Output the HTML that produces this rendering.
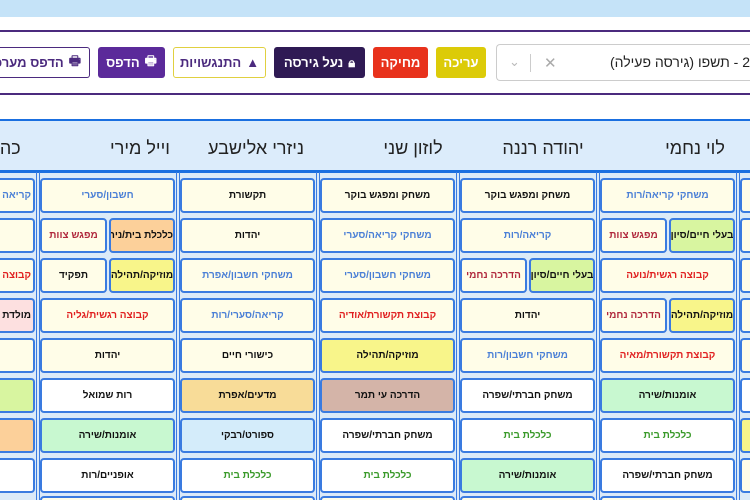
<!DOCTYPE html>
<html style="overflow:hidden"><head><meta charset="utf-8"><style>
*{margin:0;padding:0;box-sizing:border-box}
html,body{width:750px;height:500px;overflow:hidden}
body{background:#fff;font-family:"Liberation Sans","Noto Sans CJK SC",sans-serif}
#w{position:relative;width:750px;height:500px;overflow:hidden}
.a{position:absolute}
.btn{position:absolute;top:47px;height:31px;border-radius:3px;font-size:13px;font-weight:bold;display:flex;align-items:center;justify-content:center;gap:5px;direction:rtl;white-space:nowrap}
.c{position:absolute;height:35px;border:2px solid #3a7be0;border-radius:4px;background:#fffde8;font-size:10px;font-weight:bold;display:flex;align-items:center;justify-content:center;white-space:nowrap;overflow:hidden;direction:rtl;color:#111}
.b{position:absolute;top:496px;height:4px;width:135px;border:2px solid #3a7be0;border-bottom:none;border-radius:4px 4px 0 0;background:#fffde8}
.B{color:#4a7fd6}.R{color:#e02020}.C{color:#b0283c}.G{color:#3a9a2a}
.w{background:#fff}.gr{background:#d8f5a0}.ye{background:#f8f58a}.mi{background:#c8f8d0}.br{background:#d4b4a8}.or{background:#f8dc98}.sk{background:#d4ecfa}.pe{background:#fcd09a}.pk{background:#fde0e0}
.sep{position:absolute;top:172px;width:4px;height:328px;border-left:1.5px solid #3a7be0;border-right:1.5px solid #3a7be0}
.h{position:absolute;top:138px;font-size:18px;color:#222;direction:rtl;white-space:nowrap;transform:translateX(-50%)}
</style></head><body><div id="w">
<div class="a" style="left:0;top:0;width:750px;height:17px;background:#c5e3f8"></div>
<div class="a" style="left:0;top:30px;width:750px;height:2px;background:#4b2a7e"></div>
<div class="a" style="left:0;top:93px;width:750px;height:2px;background:#4b2a7e"></div>
<div class="a" style="left:496px;top:44px;width:254px;height:37px;border:1px solid #ccc;border-right:none;border-radius:4px 0 0 4px"></div>
<div class="a" style="left:530px;top:54px;width:1px;height:18px;background:#ccc"></div>
<div class="a" style="left:509px;top:54px;color:#bbb;font-size:13px">&#8964;</div>
<div class="a" style="left:544px;top:54px;color:#aaa;font-size:15px">✕</div>
<div class="a" style="left:590px;top:54px;font-size:14px;color:#222;direction:rtl;white-space:nowrap;width:160px;overflow:hidden">2 - תשפו (גירסה פעילה)</div>
<div class="btn" style="left:436px;width:50px;background:#dccb08;color:#fff">עריכה</div>
<div class="btn" style="left:373px;width:55px;background:#e8321c;color:#fff">מחיקה</div>
<div class="btn" style="left:274px;width:91px;background:#2f1a54;color:#fff"><span>&#128274;&#xFE0E;</span>נעל גירסה</div>
<div class="btn" style="left:173px;width:93px;background:#fff;border:1px solid #e0d040;color:#4b2a7e"><span>▲</span>התנגשויות</div>
<div class="btn" style="left:98px;width:67px;background:#5b2a9a;color:#fff"><span>🖶</span>הדפס</div>
<div class="btn" style="left:0;width:90px;background:#fff;border:1px solid #4b2a7e;border-left:none;border-radius:0 3px 3px 0;color:#4b2a7e;justify-content:flex-start;padding-right:8px;overflow:hidden"><span>🖶</span>הדפס מערכת</div>
<div class="a" style="left:0;top:119px;width:750px;height:54px;background:#dcecfb;border-top:2px solid #1a6fe0;border-bottom:3px solid #1a6fe0"></div>
<div class="h" style="left:695px">לוי נחמי</div>
<div class="h" style="left:543px">יהודה רננה</div>
<div class="h" style="left:413px">לוזון שני</div>
<div class="h" style="left:256px">ניזרי אלישבע</div>
<div class="h" style="left:140px">וייל מירי</div>
<div class="h" style="left:8px">כהן</div>
<div class="a" style="left:0;top:173px;width:750px;height:327px;background:#dbeaf8"></div>
<div class="sep" style="left:736px"></div><div class="sep" style="left:596px"></div><div class="sep" style="left:456px"></div><div class="sep" style="left:316px"></div><div class="sep" style="left:176px"></div><div class="sep" style="left:36px"></div>

<div class="c B" style="left:600px;top:178px;width:135px">משחקי קריאה/רות</div>
<div class="c gr" style="left:669px;top:218px;width:66px">בעלי חיים/סיון</div><div class="c C" style="left:600px;top:218px;width:67px">מפגש צוות</div>
<div class="c R" style="left:600px;top:258px;width:135px">קבוצה רגשית/נועה</div>
<div class="c ye" style="left:669px;top:298px;width:66px">מוזיקה/תהילה</div><div class="c C" style="left:600px;top:298px;width:67px">הדרכה נחמי</div>
<div class="c R" style="left:600px;top:338px;width:135px">קבוצת תקשורת/מאיה</div>
<div class="c mi" style="left:600px;top:378px;width:135px">אומנות/שירה</div>
<div class="c w G" style="left:600px;top:418px;width:135px">כלכלת בית</div>
<div class="c w" style="left:600px;top:458px;width:135px">משחק חברתי/שפרה</div>
<div class="b" style="left:600px"></div>

<div class="c" style="left:460px;top:178px;width:135px">משחק ומפגש בוקר</div>
<div class="c B" style="left:460px;top:218px;width:135px">קריאה/רות</div>
<div class="c gr" style="left:529px;top:258px;width:66px">בעלי חיים/סיון</div><div class="c C" style="left:460px;top:258px;width:67px">הדרכה נחמי</div>
<div class="c" style="left:460px;top:298px;width:135px">יהדות</div>
<div class="c B" style="left:460px;top:338px;width:135px">משחקי חשבון/רות</div>
<div class="c w" style="left:460px;top:378px;width:135px">משחק חברתי/שפרה</div>
<div class="c w G" style="left:460px;top:418px;width:135px">כלכלת בית</div>
<div class="c mi" style="left:460px;top:458px;width:135px">אומנות/שירה</div>
<div class="b" style="left:460px"></div>

<div class="c" style="left:320px;top:178px;width:135px">משחק ומפגש בוקר</div>
<div class="c B" style="left:320px;top:218px;width:135px">משחקי קריאה/סערי</div>
<div class="c B" style="left:320px;top:258px;width:135px">משחקי חשבון/סערי</div>
<div class="c R" style="left:320px;top:298px;width:135px">קבוצת תקשורת/אודיה</div>
<div class="c ye" style="left:320px;top:338px;width:135px">מוזיקה/תהילה</div>
<div class="c br" style="left:320px;top:378px;width:135px">הדרכה עי תמר</div>
<div class="c w" style="left:320px;top:418px;width:135px">משחק חברתי/שפרה</div>
<div class="c w G" style="left:320px;top:458px;width:135px">כלכלת בית</div>
<div class="b" style="left:320px"></div>

<div class="c" style="left:180px;top:178px;width:135px">תקשורת</div>
<div class="c" style="left:180px;top:218px;width:135px">יהדות</div>
<div class="c B" style="left:180px;top:258px;width:135px">משחקי חשבון/אפרת</div>
<div class="c B" style="left:180px;top:298px;width:135px">קריאה/סערי/רות</div>
<div class="c" style="left:180px;top:338px;width:135px">כישורי חיים</div>
<div class="c or" style="left:180px;top:378px;width:135px">מדעים/אפרת</div>
<div class="c sk" style="left:180px;top:418px;width:135px">ספורט/רבקי</div>
<div class="c w G" style="left:180px;top:458px;width:135px">כלכלת בית</div>
<div class="b" style="left:180px"></div>

<div class="c B" style="left:40px;top:178px;width:135px">חשבון/סערי</div>
<div class="c pe" style="left:109px;top:218px;width:66px;justify-content:flex-start">כלכלת בית/נירית</div><div class="c C" style="left:40px;top:218px;width:67px">מפגש צוות</div>
<div class="c ye" style="left:109px;top:258px;width:66px">מוזיקה/תהילה</div><div class="c" style="left:40px;top:258px;width:67px">תפקיד</div>
<div class="c R" style="left:40px;top:298px;width:135px">קבוצה רגשית/גליה</div>
<div class="c" style="left:40px;top:338px;width:135px">יהדות</div>
<div class="c w" style="left:40px;top:378px;width:135px">רות שמואל</div>
<div class="c mi" style="left:40px;top:418px;width:135px">אומנות/שירה</div>
<div class="c w" style="left:40px;top:458px;width:135px">אופניים/רות</div>
<div class="b" style="left:40px"></div>

<div class="c B" style="left:0;top:178px;width:35px;border-left:none;border-radius:0 4px 4px 0;justify-content:flex-start;padding-right:2px">קריאה</div>
<div class="c" style="left:0;top:218px;width:35px;border-left:none;border-radius:0 4px 4px 0"></div>
<div class="c R" style="left:0;top:258px;width:35px;border-left:none;border-radius:0 4px 4px 0;justify-content:flex-start;padding-right:2px">קבוצה</div>
<div class="c pk" style="left:0;top:298px;width:35px;border-left:none;border-radius:0 4px 4px 0;justify-content:flex-start;padding-right:2px">מולדת</div>
<div class="c" style="left:0;top:338px;width:35px;border-left:none;border-radius:0 4px 4px 0"></div>
<div class="c gr" style="left:0;top:378px;width:35px;border-left:none;border-radius:0 4px 4px 0"></div>
<div class="c pe" style="left:0;top:418px;width:35px;border-left:none;border-radius:0 4px 4px 0"></div>
<div class="c w" style="left:0;top:458px;width:35px;border-left:none;border-radius:0 4px 4px 0"></div>

<div class="c" style="left:740px;top:178px;width:10px;border-right:none;border-radius:4px 0 0 4px"></div>
<div class="c" style="left:740px;top:218px;width:10px;border-right:none;border-radius:4px 0 0 4px"></div>
<div class="c" style="left:740px;top:258px;width:10px;border-right:none;border-radius:4px 0 0 4px"></div>
<div class="c" style="left:740px;top:298px;width:10px;border-right:none;border-radius:4px 0 0 4px"></div>
<div class="c" style="left:740px;top:338px;width:10px;border-right:none;border-radius:4px 0 0 4px"></div>
<div class="c w" style="left:740px;top:378px;width:10px;border-right:none;border-radius:4px 0 0 4px"></div>
<div class="c ye" style="left:740px;top:418px;width:10px;border-right:none;border-radius:4px 0 0 4px"></div>
<div class="c" style="left:740px;top:458px;width:10px;border-right:none;border-radius:4px 0 0 4px"></div>
</div></body></html>
